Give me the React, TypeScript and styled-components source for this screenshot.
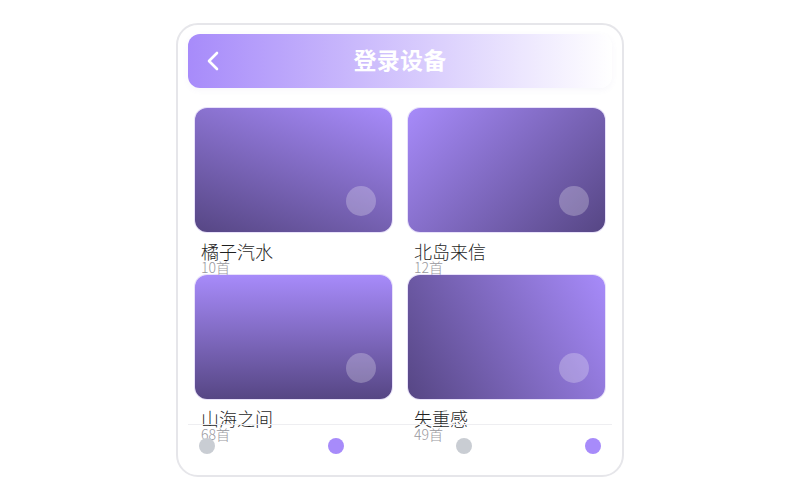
import React from "react";
import styled, { createGlobalStyle } from "styled-components";

const Global = createGlobalStyle`
  html, body { margin: 0; padding: 0; background: #ffffff; }
  body { font-family: "Noto Sans CJK SC", "Noto Sans", sans-serif; }
  * { box-sizing: border-box; }
`;

const Frame = styled.div`
  width: 448px;
  height: 454px;
  margin: 23px auto 0;
  border: 2px solid #e6e6ea;
  border-radius: 22px;
  background: #ffffff;
  padding: 9px 10px;
  display: flex;
  flex-direction: column;
`;

const Header = styled.div`
  height: 54px;
  flex: none;
  border-radius: 12px;
  background: linear-gradient(90deg, #a78bfa 0%, #ffffff 100%);
  box-shadow: 0 2px 6px rgba(120, 100, 180, 0.06);
  display: grid;
  grid-template-columns: 44px 1fr 44px;
  align-items: center;
`;

const BackButton = styled.button`
  border: none;
  background: none;
  padding: 0 0 0 18px;
  display: flex;
  align-items: center;
  cursor: pointer;
`;

const Title = styled.h1`
  margin: 0 0 4px;
  line-height: 1;
  text-align: center;
  color: #ffffff;
  font-size: 23px;
  font-weight: 700;
  font-family: "Noto Sans CJK SC", sans-serif;
  letter-spacing: 0.3px;
`;

const Content = styled.div`
  margin-top: 20px;
  height: 316px;
  flex: none;
  padding: 0 7px;
  display: grid;
  grid-template-columns: 197px 197px;
  column-gap: 16px;
  align-content: start;
`;

const Item = styled.div`
  display: flex;
  flex-direction: column;
  height: 167px;
`;

const Cover = styled.div<{ $angle: number }>`
  height: 124px;
  border-radius: 12px;
  background: linear-gradient(${(p) => p.$angle}deg, #a78bfa 0%, #564684 100%);
  box-shadow: 0 0 0 1px rgba(190, 170, 240, 0.35);
  display: flex;
  align-items: flex-end;
  justify-content: flex-end;
  padding: 16px;
`;

const PlayDot = styled.div`
  width: 30px;
  height: 30px;
  border-radius: 50%;
  background: rgba(255, 255, 255, 0.25);
`;

const Info = styled.div`
  padding: 10px 6px 0;
`;

const Name = styled.div`
  font-size: 18px;
  line-height: 18px;
  color: #1f1f1f;
  font-weight: 300;
  font-family: "Noto Sans CJK SC", sans-serif;
`;

const Count = styled.div`
  font-size: 14px;
  line-height: 15px;
  color: #98989e;
  font-weight: 300;
  font-family: "Noto Sans CJK SC", sans-serif;
`;

const TabBar = styled.div`
  height: 42px;
  flex: none;
  border-top: 1px solid #eeeef1;
  padding: 0 11px;
  display: flex;
  align-items: center;
  justify-content: space-between;
`;

const Dot = styled.span<{ $active: boolean }>`
  width: 16px;
  height: 16px;
  border-radius: 50%;
  background: ${(p) => (p.$active ? "#a78bfa" : "#c9cdd3")};
`;

const items = [
  { name: "橘子汽水", count: "10首", angle: 200 },
  { name: "北岛来信", count: "12首", angle: 135 },
  { name: "山海之间", count: "68首", angle: 180 },
  { name: "失重感", count: "49首", angle: 240 },
];

export default function App() {
  return (
    <>
      <Global />
      <Frame>
        <Header>
          <BackButton aria-label="返回">
            <svg width="14" height="20" viewBox="0 0 14 20">
              <polyline
                points="11,2 3,10 11,18"
                fill="none"
                stroke="#ffffff"
                strokeWidth="2.6"
                strokeLinecap="round"
                strokeLinejoin="round"
              />
            </svg>
          </BackButton>
          <Title>登录设备</Title>
          <span />
        </Header>
        <Content>
          {items.map((it) => (
            <Item key={it.name}>
              <Cover $angle={it.angle}>
                <PlayDot />
              </Cover>
              <Info>
                <Name>{it.name}</Name>
                <Count>{it.count}</Count>
              </Info>
            </Item>
          ))}
        </Content>
        <TabBar>
          <Dot $active={false} />
          <Dot $active={true} />
          <Dot $active={false} />
          <Dot $active={true} />
        </TabBar>
      </Frame>
    </>
  );
}
